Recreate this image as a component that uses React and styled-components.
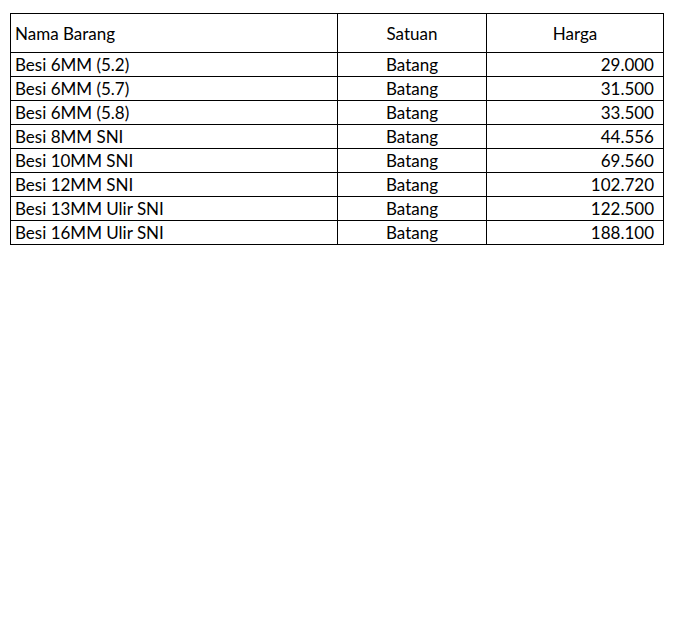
import React from "react";
import styled, { createGlobalStyle } from "styled-components";

const Global = createGlobalStyle`
  html, body { margin: 0; padding: 0; background: #fff; }
  body { font-family: Lato, "Open Sans", sans-serif; color: #000; }
`;

const Page = styled.div`
  padding: 13px 10px 0 10px;
`;

const Table = styled.table`
  border-collapse: collapse;
  table-layout: fixed;
  width: 654px;
  font-size: 17px;
`;

const HeadCell = styled.th`
  box-sizing: border-box;
  height: 39px;
  padding: 1px 4px 0 4px;
  border: 1px solid #000;
  font-weight: normal;
  text-align: ${(p) => p.$align || "center"};
  vertical-align: middle;
  line-height: 20px;
`;

const Cell = styled.td`
  box-sizing: border-box;
  height: 24px;
  padding: 0 ${(p) => (p.$align === "right" ? "9px" : "4px")} 0 4px;
  border: 1px solid #000;
  text-align: ${(p) => p.$align || "left"};
  vertical-align: middle;
  line-height: 20px;
  white-space: nowrap;
`;

const rows = [
  ["Besi 6MM (5.2)", "Batang", "29.000"],
  ["Besi 6MM (5.7)", "Batang", "31.500"],
  ["Besi 6MM (5.8)", "Batang", "33.500"],
  ["Besi 8MM SNI", "Batang", "44.556"],
  ["Besi 10MM SNI", "Batang", "69.560"],
  ["Besi 12MM SNI", "Batang", "102.720"],
  ["Besi 13MM Ulir SNI", "Batang", "122.500"],
  ["Besi 16MM Ulir SNI", "Batang", "188.100"],
];

export default function App() {
  return (
    <>
      <Global />
      <Page>
        <Table>
          <colgroup>
            <col style={{ width: 327 }} />
            <col style={{ width: 149 }} />
            <col style={{ width: 177 }} />
          </colgroup>
          <thead>
            <tr>
              <HeadCell $align="left">Nama Barang</HeadCell>
              <HeadCell>Satuan</HeadCell>
              <HeadCell>Harga</HeadCell>
            </tr>
          </thead>
          <tbody>
            {rows.map(([n, s, h]) => (
              <tr key={n}>
                <Cell>{n}</Cell>
                <Cell $align="center">{s}</Cell>
                <Cell $align="right">{h}</Cell>
              </tr>
            ))}
          </tbody>
        </Table>
      </Page>
    </>
  );
}
